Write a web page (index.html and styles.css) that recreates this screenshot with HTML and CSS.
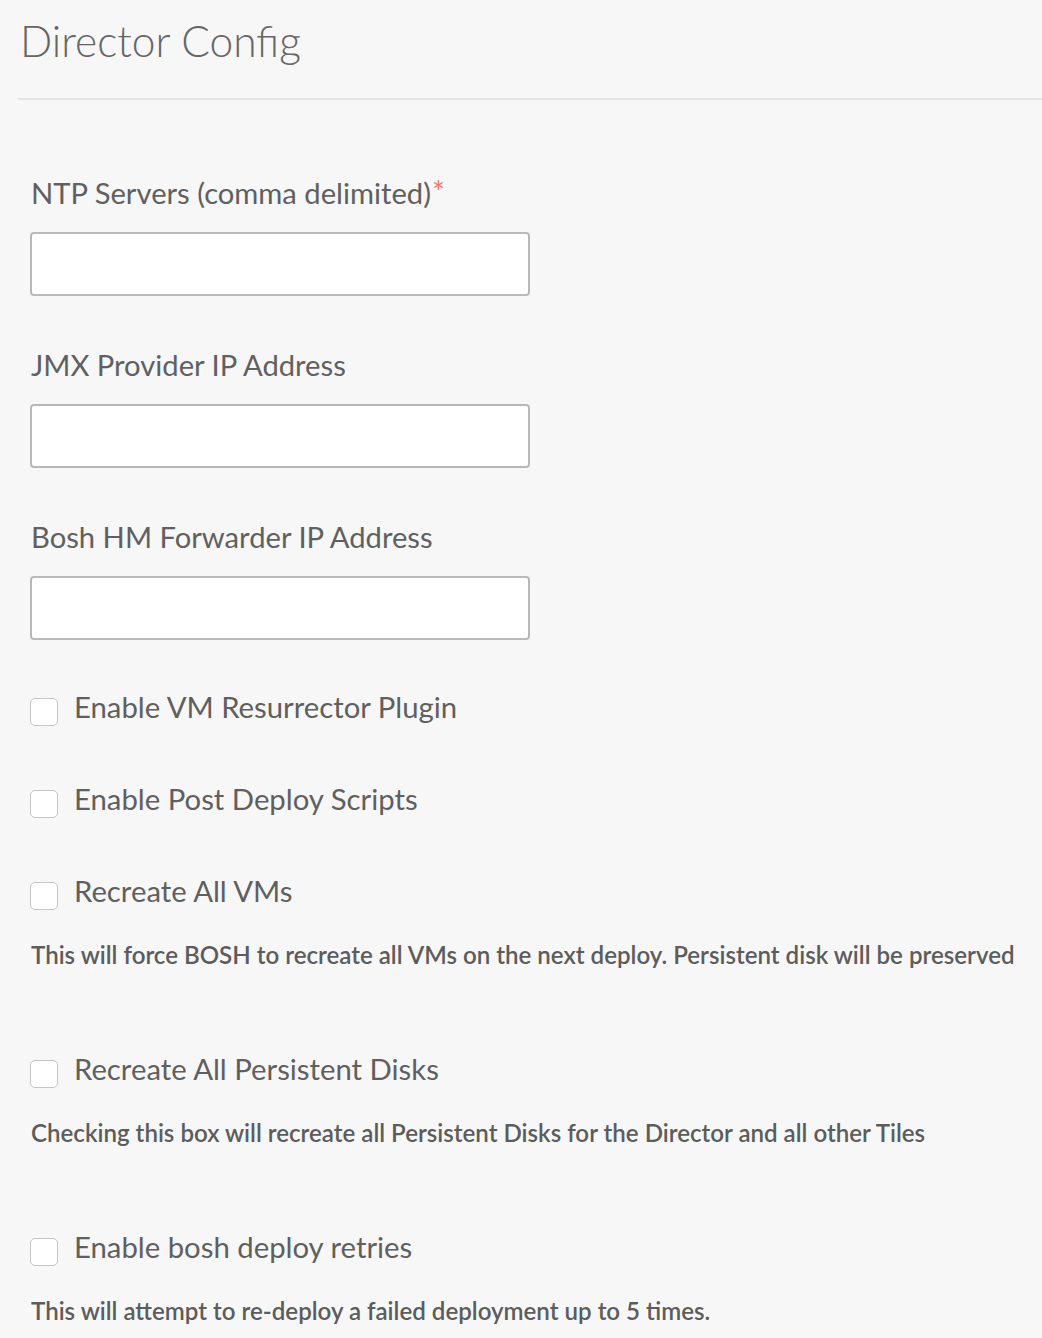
FILE: index.html
```html
<!DOCTYPE html>
<html>
<head>
<meta charset="utf-8">
<link rel="stylesheet" href="styles.css">
</head>
<body>
<div class="page">
  <h1 class="title">Director Config</h1>
  <div class="divider"></div>
  <form class="config">
    <div class="field">
      <label class="field-label">NTP Servers (comma delimited)<span class="req">*</span></label>
      <input class="text-input" type="text">
    </div>
    <div class="field">
      <label class="field-label">JMX Provider IP Address</label>
      <input class="text-input" type="text">
    </div>
    <div class="field">
      <label class="field-label">Bosh HM Forwarder IP Address</label>
      <input class="text-input" type="text">
    </div>
    <div class="check-row first">
      <span class="box"></span><span class="check-label">Enable VM Resurrector Plugin</span>
    </div>
    <div class="check-row">
      <span class="box"></span><span class="check-label">Enable Post Deploy Scripts</span>
    </div>
    <div class="check-row">
      <span class="box"></span><span class="check-label">Recreate All VMs</span>
    </div>
    <p class="help">This will force BOSH to recreate all VMs on the next deploy. Persistent disk will be preserved</p>
    <div class="check-row spaced">
      <span class="box"></span><span class="check-label">Recreate All Persistent Disks</span>
    </div>
    <p class="help">Checking this box will recreate all Persistent Disks for the Director and all other Tiles</p>
    <div class="check-row spaced">
      <span class="box"></span><span class="check-label">Enable bosh deploy retries</span>
    </div>
    <p class="help">This will attempt to re-deploy a failed deployment up to 5 times.</p>
  </form>
</div>
</body>
</html>
```
FILE: styles.css
```css
html, body {
  margin: 0;
  padding: 0;
  background: #f7f7f7;
}
body {
  font-family: "Lato", "Liberation Sans", sans-serif;
  color: #5f5f5f;
  width: 1042px;
  height: 1338px;
  overflow: hidden;
}
.title {
  margin: 0;
  padding: 13px 0 0 20px;
  font-size: 42.5px;
  font-weight: 300;
  line-height: 56px;
  color: #666;
}
.divider {
  margin: 29px 0 0 18px;
  height: 2px;
  background: #e3e3e3;
}
.config {
  padding: 0 0 0 30px;
  display: flex;
  flex-direction: column;
}
.field {
  display: flex;
  flex-direction: column;
}
.field:first-child {
  margin-top: 73px;
}
.field + .field {
  margin-top: 49px;
}
.field-label {
  font-size: 29.2px;
  line-height: 40px;
  padding-left: 1px;
  color: #606060;
}
.req {
  color: #ef7a66;
  font-size: 30px;
  vertical-align: top;
  margin-left: 1px;
  line-height: 36px;
}
.text-input {
  margin: 19px 0 0 0;
  width: 500px;
  height: 64px;
  box-sizing: border-box;
  border: 2px solid #b8b8b8;
  border-radius: 4px;
  background: #fff;
  outline: none;
}
.check-row {
  display: flex;
  align-items: center;
  gap: 16px;
  height: 40px;
  margin-top: 52px;
}
.check-row.first {
  margin-top: 47px;
}
.check-row.spaced {
  margin-top: 78px;
}
.box {
  width: 26px;
  height: 26px;
  border: 1px solid #c6c6c6;
  border-radius: 5px;
  background: #fff;
  flex: none;
  margin-top: 9px;
}
.check-label {
  font-size: 29.3px;
  line-height: 40px;
  color: #5f5f5f;
}
.help {
  margin: 28px 0 0 1px;
  font-size: 24.1px;
  line-height: 32px;
  font-weight: 600;
  color: #5c5c5c;
  white-space: nowrap;
}
```
